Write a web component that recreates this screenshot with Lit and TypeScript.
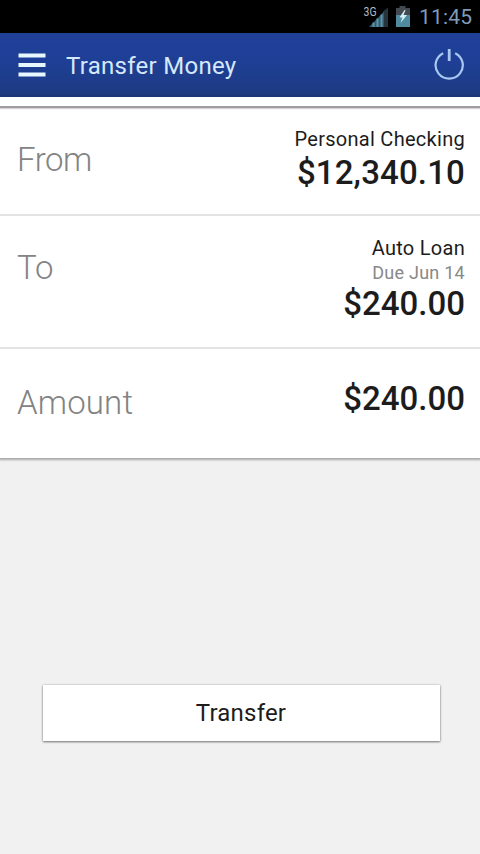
import { LitElement, html, css, svg, nothing } from "lit";
import { customElement, property } from "lit/decorators.js";

@customElement("status-bar")
class StatusBar extends LitElement {
  static styles = css`
    :host {
      display: flex;
      justify-content: flex-end;
      height: 33px;
      background: #000;
      color: #7f9bb8;
    }
    .icons { display: block; width: 52px; height: 33px; }
    .net { font: 400 12px Roboto, sans-serif; fill: #b3bbc3; }
    .time {
      font: 400 21px/35px Roboto, sans-serif;
      width: 65px;
      padding-left: 4px;
      box-sizing: border-box;
      letter-spacing: 0.2px;
      white-space: nowrap;
    }
  `;
  render() {
    return html`
      <svg class="icons" viewBox="0 0 52 33">
        <path d="M20.5 11L25 7.5V27H20.5Z" fill="#26343c" />
        <path d="M6 27L21 11.5V27Z" fill="#355d70" />
        ${[10.5, 14.5, 18.5].map((x) => svg`<path d=${`M${x} 27V${33 - x}`} stroke="#5d95aa" stroke-width="2" />`)}
        <text class="net" x="0.5" y="15.5" textLength="13" lengthAdjust="spacingAndGlyphs">3G</text>
        <path d="M36.5 8V6H42.5V8H47V15H33V8Z" fill="#424a50" />
        <path d="M33 15H47V27H33Z" fill="#4f8ba0" />
        <path d="M41.5 10L36.5 17.5H39.5L37.5 23L44 15H40.5L42.5 10Z" fill="#d5f2f5" />
      </svg>
      <div class="time">11:45</div>
    `;
  }
}

@customElement("title-bar")
class TitleBar extends LitElement {
  static styles = css`
    :host {
      display: flex;
      align-items: center;
      height: 64px;
      box-sizing: border-box;
      padding: 0 15px 0 18px;
      background: linear-gradient(#20409a 0, #1e3f95 45%, #1d3a82 95%, #1c3573);
      color: #d6e8fb;
    }
    .menu { width: 28px; height: 24px; margin-right: 20px; }
    .title {
      flex: 1;
      font: 400 24px/64px Roboto, sans-serif;
      letter-spacing: 0.28px;
      padding-top: 2px;
    }
    .power { width: 32px; height: 36px; margin-top: -3px; }
  `;
  render() {
    return html`
      <svg class="menu" viewBox="0 0 28 24">
        <path d="M0.5 2.5H27.5M0.5 12H27.5M0.5 21.5H27.5" stroke="#e8f8ff" stroke-width="4" />
      </svg>
      <div class="title">Transfer Money</div>
      <svg class="power" viewBox="0 0 32 36" fill="none" stroke="#a9c9f3">
        <path d="M10.2 7.2A13.6 13.4 0 1 0 22.2 7.2" stroke-width="2.2" />
        <path d="M16.2 3V15" stroke-width="2.8" />
      </svg>
    `;
  }
}

@customElement("transfer-row")
class TransferRow extends LitElement {
  @property() label = "";
  @property() name = "";
  @property() due = "";
  @property() amount = "";
  static styles = css`
    :host {
      display: flex;
      justify-content: space-between;
      align-items: flex-start;
      box-sizing: border-box;
      padding: 0 15px 0 17px;
      font-family: Roboto, sans-serif;
      background: #fff;
    }
    .label {
      margin-top: var(--label-top);
      font-size: 33px;
      line-height: 40px;
      font-weight: 300;
      letter-spacing: var(--label-spacing, 0);
      color: #838383;
    }
    .detail {
      display: flex;
      flex-direction: column;
      align-items: flex-end;
      margin-top: var(--detail-top);
      color: #1c1c1c;
    }
    .name { font-size: 20px; line-height: 26px; letter-spacing: 0.28px; }
    .due { font-size: 18px; line-height: 23px; letter-spacing: 0.25px; color: #888; }
    .amount {
      font-size: 33px;
      line-height: 40px;
      font-weight: 500;
      letter-spacing: var(--amount-spacing, 0);
      padding-top: var(--amount-gap, 0);
    }
  `;
  render() {
    return html`
      <div class="label">${this.label}</div>
      <div class="detail">
        ${this.name ? html`<div class="name">${this.name}</div>` : nothing}
        ${this.due ? html`<div class="due">${this.due}</div>` : nothing}
        <div class="amount">${this.amount}</div>
      </div>
    `;
  }
}

@customElement("app-root")
class AppRoot extends LitElement {
  static styles = css`
    :host {
      display: flex;
      flex-direction: column;
      height: 854px;
      background: #f1f1f1;
      overflow: hidden;
    }
    .strip {
      height: 9px;
      background: #fff;
      border-bottom: 2px solid #a09ca2;
      box-shadow: 0 1px 1px #d5d3d4;
      z-index: 1;
    }
    .card {
      box-shadow: 0 1px 2px 1px #a9a9a9;
      background: #fff;
    }
    .row { border-bottom: 2px solid #e3e3e3; }
    .from {
      height: 108px;
      --label-top: 32px;
      --detail-top: 18px;
      --label-spacing: -0.5px;
      --amount-gap: 1px;
      --amount-spacing: 0.15px;
    }
    .to { height: 133px; --label-top: 32px; --detail-top: 19px; }
    .sum { height: 109px; border: 0; --label-top: 34px; --detail-top: 30px; --label-spacing: 0.15px; }
    .button {
      margin: 227px 40px 0 43px;
      height: 56px;
      border: 0;
      padding: 0 1px 0 0;
      background: #fff;
      box-shadow: 0 1px 2px #777, 0 0 2px #bbb;
      font: 400 24px/56px Roboto, sans-serif;
      letter-spacing: 0.2px;
      color: #1c1c1c;
    }
  `;
  render() {
    return html`
      <status-bar></status-bar>
      <title-bar></title-bar>
      <div class="strip"></div>
      <div class="card">
        <transfer-row class="row from" label="From" name="Personal Checking" amount="$12,340.10"></transfer-row>
        <transfer-row class="row to" label="To" name="Auto Loan" due="Due Jun 14" amount="$240.00"></transfer-row>
        <transfer-row class="row sum" label="Amount" amount="$240.00"></transfer-row>
      </div>
      <button class="button">Transfer</button>
    `;
  }
}
